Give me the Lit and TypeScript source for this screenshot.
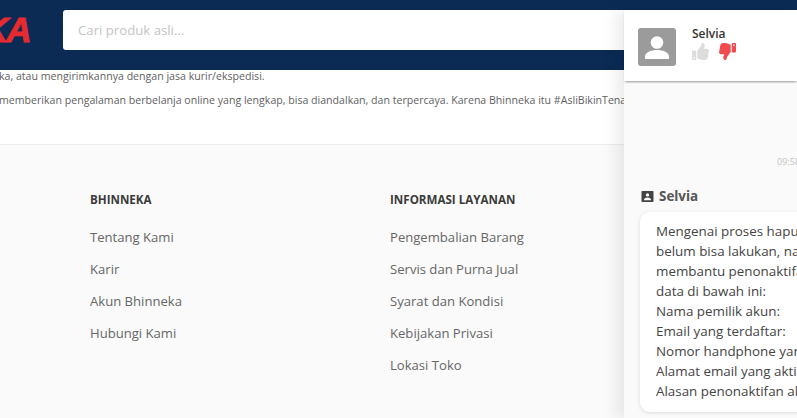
import { LitElement, html, css } from "lit";
import { customElement } from "lit/decorators.js";

const col1 = ["Tentang Kami", "Karir", "Akun Bhinneka", "Hubungi Kami"];
const col2 = ["Pengembalian Barang", "Servis dan Purna Jual", "Syarat dan Kondisi", "Kebijakan Privasi", "Lokasi Toko"];
const msg = ["Mengenai proses hapus akun, saat ini", "belum bisa lakukan, namun kami dapat", "membantu penonaktifan akun dengan", "data di bawah ini:", "Nama pemilik akun:", "Email yang terdaftar:", "Nomor handphone yang terdaftar:", "Alamat email yang aktif:", "Alasan penonaktifan akun:"];
const THUMB = "M104 224H24c-13.255 0-24 10.745-24 24v240c0 13.255 10.745 24 24 24h80c13.255 0 24-10.745 24-24V248c0-13.255-10.745-24-24-24zM64 472c-13.255 0-24-10.745-24-24s10.745-24 24-24 24 10.745 24 24-10.745 24-24 24zM384 81.452c0 42.416-25.97 66.208-33.277 94.548h101.723c33.397 0 59.397 27.746 59.553 58.098.084 17.938-7.546 37.249-19.439 49.197l-.11.11c9.836 23.337 8.237 56.037-9.308 79.469 8.681 25.895-.069 57.704-16.382 74.757 4.298 17.598 2.244 32.575-6.148 44.632C440.202 511.587 389.616 512 346.839 512l-2.845-.001c-48.287-.017-87.806-17.598-119.56-31.725-15.957-7.099-36.821-15.887-52.651-16.178-6.54-.12-11.783-5.457-11.783-11.998v-213.77c0-3.2 1.282-6.271 3.558-8.521 39.614-39.144 56.648-80.587 89.117-113.111 14.804-14.832 20.188-37.236 25.393-58.902C282.515 39.293 291.817 0 312 0c24 0 72 8 72 81.452z";

@customElement("app-root")
export class AppRoot extends LitElement {
  static styles = css`
    :host { display: block; position: relative; width: 797px; height: 418px; overflow: hidden; background: #fff; font-family: "Open Sans", sans-serif; color: #555; }
    .header { height: 70px; box-sizing: border-box; background: #0b2b55; display: flex; align-items: flex-start; padding: 10px 0 0 63px; position: relative; }
    .logo { position: absolute; left: -17px; top: 11px; font: italic 700 35px/38px "Liberation Sans", sans-serif; color: #e52a30; letter-spacing: -2px; -webkit-text-stroke: 1px #e52a30; }
    .search { width: 600px; height: 40px; box-sizing: border-box; background: #fff; border-radius: 3px; padding-left: 15px; font-size: 13.2px; line-height: 40px; color: #c4c4c4; }
    .intro { height: 75px; box-sizing: border-box; border-bottom: 1px solid #eee; font-size: 10.6px; line-height: 12px; color: #5f5f5f; white-space: nowrap; display: flex; flex-direction: column; gap: 12px; }
    .line1 { margin-left: -1px; }
    .line2 { margin-left: -1px; }
    .footer { height: 273px; background: #fafafa; padding: 46px 0 0 90px; display: grid; grid-template-columns: 300px 300px; box-sizing: border-box; }
    .footer h4 { margin: 0 0 12px; font-size: 11.6px; font-weight: 700; line-height: 18px; color: #3a3a3a; }
    .footer a { display: block; font-size: 13.1px; line-height: 32px; color: #666; }
    .panel { position: absolute; left: 624px; top: 10px; width: 173px; bottom: 0; background: #fafafa; box-shadow: -8px 0 14px rgba(0,0,0,0.08); }
    .panel-head { height: 71px; box-sizing: border-box; background: #fff; box-shadow: 0 2px 2px -1px rgba(0,0,0,0.4); display: flex; padding: 18px 0 0 14px; gap: 16px; }
    .avatar { width: 38px; height: 38px; border-radius: 3px; background: #9b9b9b; display: block; }
    .who { font-size: 12px; font-weight: 600; line-height: 16px; color: #333; margin-top: -2px; }
    .thumbs { display: flex; gap: 9px; margin-top: 1px; }
    .thumbs svg { width: 17px; height: 17px; display: block; }
    .thumbs svg + svg { margin-left: 1px; }
    .time { font-size: 9px; line-height: 12px; color: #c2c2c2; text-align: left; padding: 75px 0 0 153px; white-space: nowrap; overflow: hidden; }
    .sender { display: flex; align-items: center; gap: 5px; margin: 18px 0 0 17px; font-size: 13.4px; font-weight: 700; line-height: 20px; color: #555; }
    .sender svg { width: 13px; height: 13px; }
    .bubble { margin: 6px 0 0 16px; width: 200px; height: 200px; box-sizing: border-box; background: #fff; border-radius: 10px; box-shadow: 0 1px 4px rgba(0,0,0,0.12); padding: 9px 0 0 16px; font-size: 13.4px; line-height: 20px; color: #444; white-space: nowrap; }
  `;
  render() {
    return html`
      <div class="header">
        <div class="logo">KA</div>
        <div class="search">Cari produk asli...</div>
      </div>
      <div class="intro">
        <div class="line1">ka, atau mengirimkannya dengan jasa kurir/ekspedisi.</div>
        <div class="line2">memberikan pengalaman berbelanja online yang lengkap, bisa diandalkan, dan terpercaya. Karena Bhinneka itu #AsliBikinTenang</div>
      </div>
      <div class="footer">
        <div><h4>BHINNEKA</h4>${col1.map((t) => html`<a>${t}</a>`)}</div>
        <div><h4>INFORMASI LAYANAN</h4>${col2.map((t) => html`<a>${t}</a>`)}</div>
      </div>
      <div class="panel">
        <div class="panel-head">
          <svg class="avatar" viewBox="0 0 38 38"><circle cx="19" cy="14.5" r="6.3" fill="#fff"/><path d="M7 31v-2.500c0-4.500 7-6.500 12-6.500s12 2 12 6.500V31z" fill="#fff"/></svg>
          <div>
            <div class="who">Selvia</div>
            <div class="thumbs">
              <svg viewBox="0 0 512 512"><path d="${THUMB}" fill="#dcdcdc"/></svg>
              <svg viewBox="0 0 512 512"><path d="${THUMB}" fill="#ef4b50" transform="rotate(180 256 256)"/></svg>
            </div>
          </div>
        </div>
        <div class="time">09:58</div>
        <div class="sender">
          <svg viewBox="0 0 13 13"><path d="M1.500 1h10c.6 0 1 .4 1 1v9c0 .6-.4 1-1 1h-10c-.6 0-1-.4-1-1V2c0-.6.4-1 1-1zM6.500 3.200a1.700 1.700 0 1 0 0 3.400 1.700 1.700 0 0 0 0-3.400zM3 10.300h7v-.8c0-1.300-2.300-2-3.500-2S3 8.200 3 9.500z" fill="#444" fill-rule="evenodd"/></svg>
          <span>Selvia</span>
        </div>
        <div class="bubble">${msg.map((t) => html`<div>${t}</div>`)}</div>
      </div>
    `;
  }
}
